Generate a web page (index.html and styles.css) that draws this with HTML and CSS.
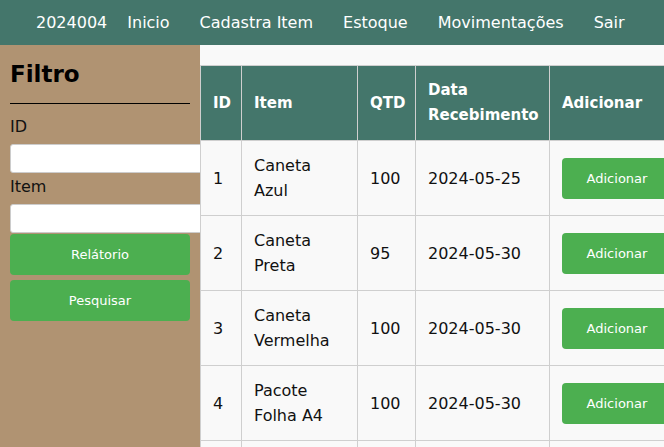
FILE: index.html
```html
<!DOCTYPE html>
<html lang="pt">
<head>
<meta charset="utf-8">
<link rel="stylesheet" href="styles.css">
</head>
<body>
<nav class="topnav">
  <a class="nav-link nav-brand">2024004</a>
  <a class="nav-link">Inicio</a>
  <a class="nav-link">Cadastra Item</a>
  <a class="nav-link">Estoque</a>
  <a class="nav-link">Movimentações</a>
  <a class="nav-link">Sair</a>
</nav>
<div class="layout">
  <aside class="sidebar">
    <h2 class="side-title">Filtro</h2>
    <hr class="side-rule">
    <label class="field-label">ID</label>
    <input class="field-input" type="text">
    <label class="field-label">Item</label>
    <input class="field-input" type="text">
    <button class="side-btn">Relátorio</button>
    <button class="side-btn">Pesquisar</button>
  </aside>
  <main class="content">
    <table class="stock-table">
      <colgroup>
        <col class="c-id"><col class="c-item"><col class="c-qtd"><col class="c-date"><col class="c-add">
      </colgroup>
      <thead>
        <tr><th>ID</th><th>Item</th><th>QTD</th><th>Data Recebimento</th><th>Adicionar</th></tr>
      </thead>
      <tbody>
        <tr><td>1</td><td>Caneta Azul</td><td>100</td><td>2024-05-25</td><td><button class="add-btn">Adicionar</button></td></tr>
        <tr><td>2</td><td>Caneta Preta</td><td>95</td><td>2024-05-30</td><td><button class="add-btn">Adicionar</button></td></tr>
        <tr><td>3</td><td>Caneta Vermelha</td><td>100</td><td>2024-05-30</td><td><button class="add-btn">Adicionar</button></td></tr>
        <tr><td>4</td><td>Pacote Folha A4</td><td>100</td><td>2024-05-30</td><td><button class="add-btn">Adicionar</button></td></tr>
        <tr><td></td><td></td><td></td><td></td><td></td></tr>
      </tbody>
    </table>
  </main>
</div>
</body>
</html>
```
FILE: styles.css
```css
* { box-sizing: border-box; }
html, body { height: 100%; }
body {
  margin: 0;
  font-family: "DejaVu Sans", "Liberation Sans", sans-serif;
  color: #111;
  overflow: hidden;
}
.topnav {
  height: 45px;
  background: #44766b;
  display: flex;
  align-items: center;
  padding-left: 36px;
  gap: 30px;
}
.nav-link {
  color: #fff;
  font-size: 16px;
}
.nav-brand { margin-right: -10px; }
.layout {
  display: flex;
  height: calc(100% - 45px);
}
.sidebar {
  width: 200px;
  flex: none;
  background: #b09372;
  padding: 10px 10px;
  display: flex;
  flex-direction: column;
}
.side-title {
  margin: 3px 0 0;
  font-size: 23px;
  font-weight: 700;
  line-height: 32px;
  color: #000;
}
.side-rule {
  margin: 13px 0 11px;
  border: 0;
  border-top: 1px solid #000;
  width: 180px;
}
.field-label {
  font-size: 16px;
  line-height: 24px;
  margin-bottom: 5px;
}
.field-input {
  width: 200px;
  height: 29px;
  border: 1px solid #ccc;
  border-radius: 3px;
  background: #fff;
  margin-bottom: 2px;
}
.side-btn {
  width: 180px;
  height: 41px;
  border: 0;
  border-radius: 4px;
  background: #4caf50;
  color: #fff;
  font-family: inherit;
  font-size: 13px;
  margin-bottom: 5px;
}
.field-input + .side-btn { margin-top: -1px; }
.content {
  flex: 1;
  min-width: 0;
  overflow: hidden;
  background: #f9f9f9;
  padding-top: 20px;
}
.stock-table {
  border-collapse: collapse;
  table-layout: fixed;
  width: 560px;
}
.c-id { width: 41px; }
.c-item { width: 116px; }
.c-qtd { width: 58px; }
.c-date { width: 134px; }
.c-add { width: 211px; }
.stock-table th,
.stock-table td {
  border: 1px solid #cfcfcf;
  padding: 12px 12px;
  text-align: left;
  font-size: 16px;
  line-height: 25px;
  height: 75px;
}
.stock-table th {
  background: #44766b;
  color: #fff;
  font-weight: 700;
  font-size: 15px;
}
.stock-table td { background: #f9f9f9; }
.add-btn {
  width: 110px;
  height: 41px;
  border: 0;
  border-radius: 4px;
  background: #4caf50;
  color: #fff;
  font-family: inherit;
  font-size: 13px;
}
```
